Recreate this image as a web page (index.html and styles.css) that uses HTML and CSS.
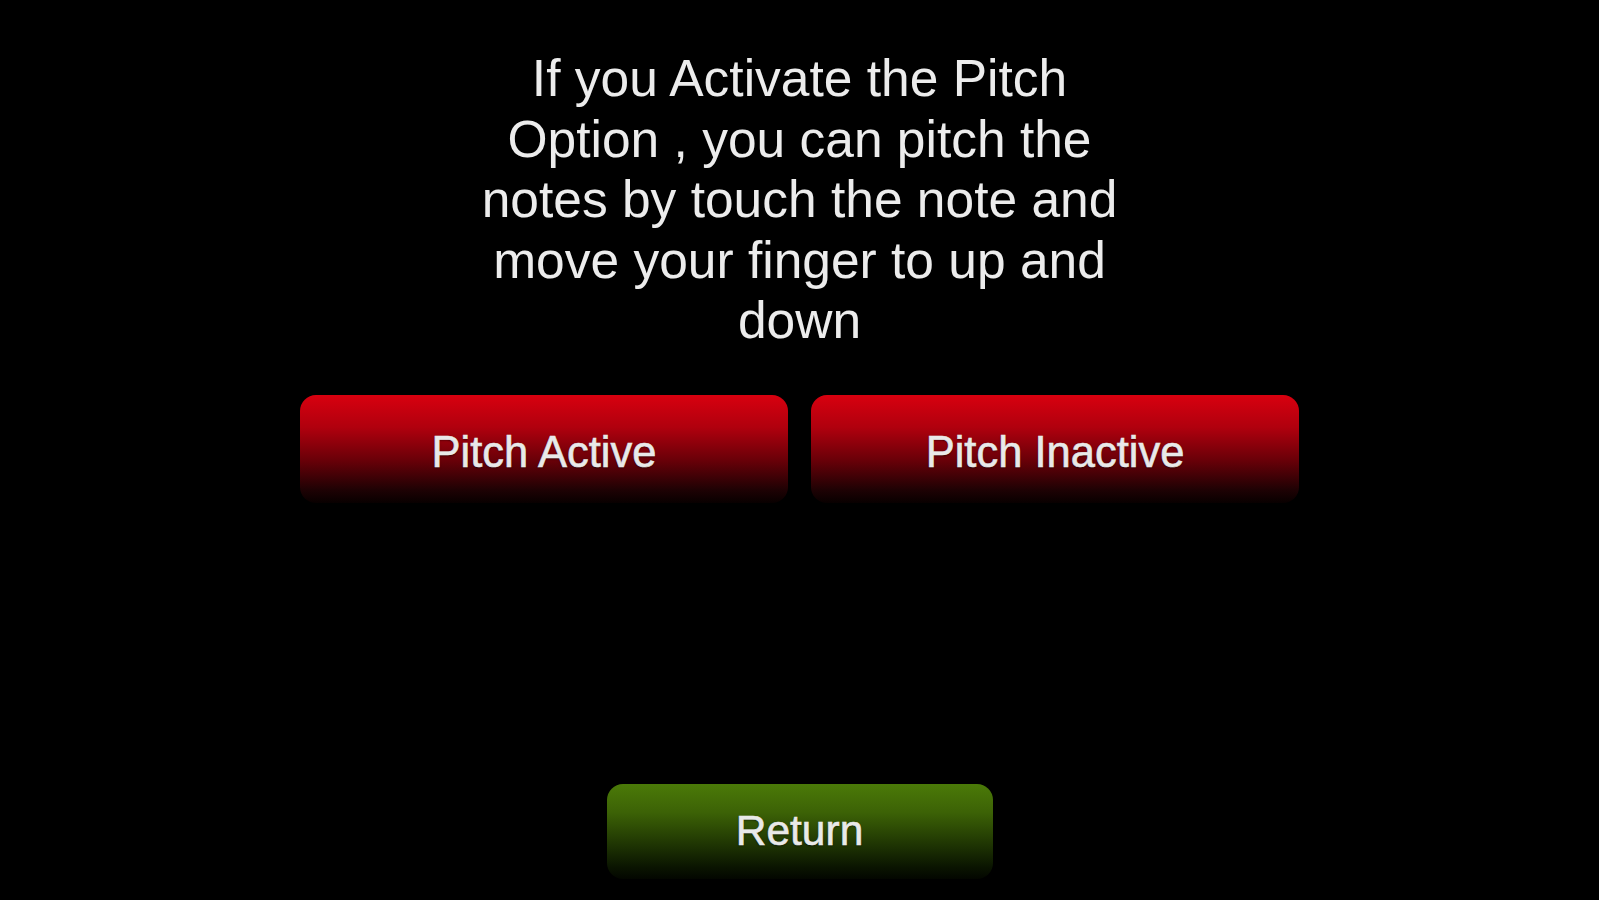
FILE: index.html
```html
<!DOCTYPE html>
<html>
<head>
<meta charset="utf-8">
<link rel="stylesheet" href="styles.css">
</head>
<body>
<main class="screen">
  <p class="info">If you Activate the Pitch<br>Option , you can pitch the<br>notes by touch the note and<br>move your finger to up and<br>down</p>
  <div class="choices">
    <button class="btn btn-red">Pitch Active</button>
    <button class="btn btn-red">Pitch Inactive</button>
  </div>
  <button class="btn btn-green">Return</button>
</main>
</body>
</html>
```
FILE: styles.css
```css
html, body {
  margin: 0;
  padding: 0;
  background: #000;
}
.screen {
  width: 1599px;
  height: 900px;
  display: flex;
  flex-direction: column;
  align-items: center;
  font-family: "Liberation Sans", Arial, sans-serif;
}
.info {
  margin: 48px 0 0;
  color: #ececec;
  font-size: 51.5px;
  line-height: 60.5px;
  text-align: center;
}
.choices {
  display: flex;
  gap: 23px;
  margin-top: 44px;
}
.btn {
  border: none;
  color: #e9e9e9;
  font-family: "Liberation Sans", Arial, sans-serif;
  font-weight: normal;
  font-size: 43.5px;
  -webkit-text-stroke: 0.6px #e9e9e9;
  border-radius: 16px;
  padding: 8px 0 0;
  text-shadow: 0 1px 2px rgba(0,0,0,0.6);
  cursor: pointer;
}
.btn-red {
  width: 488px;
  height: 108px;
  background: linear-gradient(to bottom, #d8000f 0%, #b0000e 30%, #6a0008 60%, #1e0204 88%, #080000 100%);
}
.btn-green {
  margin-top: 281px;
  width: 386px;
  height: 95px;
  padding-top: 0;
  font-size: 42.5px;
  background: linear-gradient(to bottom, #4b7a08 0%, #3c6206 30%, #223a03 60%, #0a1401 88%, #030600 100%);
}
```
